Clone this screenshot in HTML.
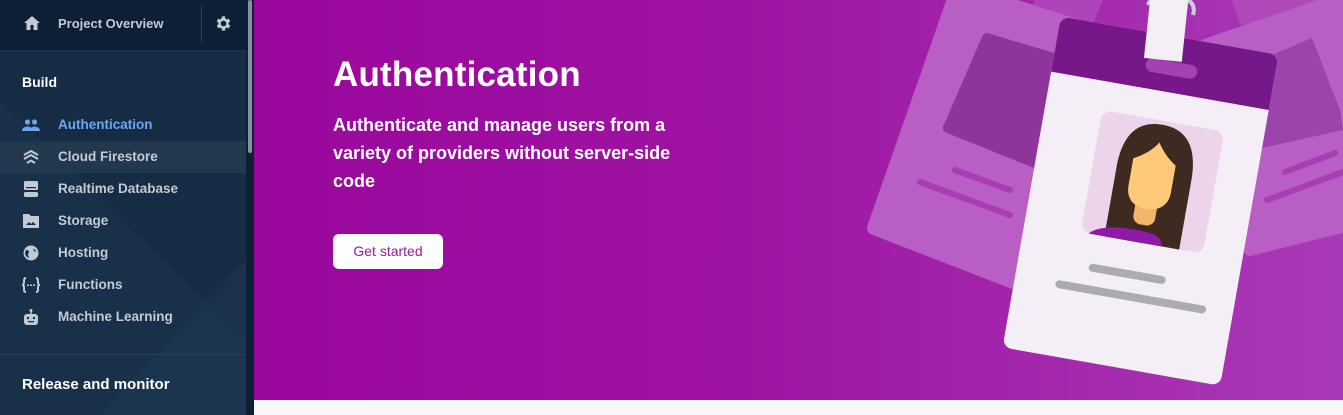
<!DOCTYPE html>
<html><head><style>
*{margin:0;padding:0;box-sizing:border-box}
body{width:1343px;height:415px;overflow:hidden;background:#f6f7f9;font-family:"Liberation Sans",sans-serif;position:relative}
#side{position:absolute;left:0;top:0;width:246px;height:415px;background:#162c45;overflow:hidden}
#top{position:absolute;left:0;top:0;width:246px;height:51px;background:#0d1f35;border-bottom:1px solid #24384f}
.it{position:absolute;left:0;width:246px;height:32px;color:#c3cad3;font-size:13.5px;font-weight:bold;line-height:32px;padding-left:58px}
.ic{position:absolute;left:22px;top:8px;width:18px;height:16px}
#sb{position:absolute;left:246px;top:0;width:8px;height:415px;background:#0e2035}
#thumb{position:absolute;left:248px;top:0;width:4px;height:153px;background:#8692a1;border-radius:2px}
#ban{position:absolute;left:254px;top:0;width:1089px;height:400px;background:linear-gradient(90deg,#9a079c 0%,#9e14a2 45%,#a93ab6 100%);overflow:hidden}
h1{position:absolute;left:79px;top:55px;color:#fff;font-size:35px;font-weight:bold;letter-spacing:0.2px}
.sub{position:absolute;left:79px;top:111px;color:#fff;font-size:18px;font-weight:bold;line-height:28px;width:372px}
.btn{position:absolute;left:79px;top:234px;width:110px;height:35px;background:#fff;border-radius:6px;color:#9a1a9e;font-size:14px;text-align:center;line-height:35px}
</style></head><body>
<div id="side">
<svg width="246" height="415" style="position:absolute;left:0;top:0"><polygon points="0,100 246,340 246,415 0,415" fill="#1a3350" opacity="0.5"/><polygon points="246,260 100,415 246,415" fill="#1e3856" opacity="0.5"/></svg>
<div id="top">
<svg style="position:absolute;left:23px;top:15px" width="18" height="16" viewBox="0 0 18 16"><path d="M9 1L1 8h2.5v7h4v-5h3v5h4V8H17z" fill="#c3cad3"/></svg>
<div style="position:absolute;left:58px;top:16px;color:#c3cad3;font-size:13px;font-weight:bold">Project Overview</div>
<div style="position:absolute;left:201px;top:6px;width:1px;height:36px;background:#2b3e55"></div>
<svg style="position:absolute;left:214px;top:14px" width="19" height="19" viewBox="0 0 24 24"><path fill="#c3cad3" d="M19.4 13a7.5 7.5 0 000-2l2.1-1.6-2-3.5-2.5 1a7 7 0 00-1.7-1L15 3h-4l-.4 2.9a7 7 0 00-1.7 1l-2.5-1-2 3.5L6.6 11a7.5 7.5 0 000 2l-2.1 1.6 2 3.5 2.5-1a7 7 0 001.7 1L11 21h4l.4-2.9a7 7 0 001.7-1l2.5 1 2-3.5zM13 15.5a3.5 3.5 0 110-7 3.5 3.5 0 010 7z" transform="translate(-1 0)"/></svg>
</div>
<div style="position:absolute;left:22px;top:74px;color:#fff;font-size:14px;font-weight:bold">Build</div>
<div class="it" style="top:109px;color:#6ea6ee"><svg class="ic" viewBox="0 0 18 16"><circle cx="5.5" cy="5" r="2.6" fill="#6ea6ee"/><circle cx="12.5" cy="5" r="2.6" fill="#6ea6ee"/><path d="M0 14c0-3 3-4.5 5.5-4.5S11 11 11 14zM8 14c0-2.5 2.5-4.5 4.5-4.5S18 11 18 14z" fill="#6ea6ee"/></svg>Authentication</div>
<div class="it" style="top:141px;background:#22384f"><svg class="ic" viewBox="0 0 18 16"><path d="M2 6l7-4 7 4M2 10l7-4 7 4M5 14l4-2.5 4 2.5" stroke="#c3cad3" stroke-width="2" fill="none"/></svg>Cloud Firestore</div>
<div class="it" style="top:173px"><svg class="ic" viewBox="0 0 18 16"><rect x="2" y="0" width="14" height="9" rx="1.5" fill="#c3cad3"/><rect x="2" y="11" width="14" height="5" rx="1.5" fill="#c3cad3"/><rect x="4" y="6" width="10" height="1.2" fill="#162c45"/></svg>Realtime Database</div>
<div class="it" style="top:205px"><svg class="ic" viewBox="0 0 18 16"><path d="M1 1h6l2 2h8v12H1z" fill="#c3cad3"/><path d="M4 12l3-3 2 2 2-2 3 3z" fill="#162c45"/></svg>Storage</div>
<div class="it" style="top:237px"><svg class="ic" viewBox="0 0 18 16"><circle cx="9" cy="8" r="7.5" fill="#c3cad3"/><path d="M4 5c2 0 3 1 3 2s-1 1-1 3l1 3c-2-.5-4-3-4-5zM11 3c1 1 0 2 1 3s2 0 3 1" fill="#162c45"/></svg>Hosting</div>
<div class="it" style="top:269px"><svg class="ic" viewBox="0 0 18 16"><path d="M4 1C2 1 2 3 2 5s-1 3-1 3 1 0 1 3 0 4 2 4M14 1c2 0 2 2 2 4s1 3 1 3-1 0-1 3 0 4-2 4" stroke="#c3cad3" stroke-width="2" fill="none"/><rect x="5" y="7.5" width="2" height="1.5" fill="#c3cad3"/><rect x="8" y="7.5" width="2" height="1.5" fill="#c3cad3"/><rect x="11" y="7.5" width="2" height="1.5" fill="#c3cad3"/></svg>Functions</div>
<div class="it" style="top:301px"><svg class="ic" viewBox="0 0 18 16"><circle cx="9" cy="1.5" r="1.5" fill="#c3cad3"/><rect x="8.3" y="2" width="1.4" height="3" fill="#c3cad3"/><rect x="2" y="5" width="14" height="11" rx="3" fill="#c3cad3"/><circle cx="6" cy="9" r="1.2" fill="#162c45"/><circle cx="12" cy="9" r="1.2" fill="#162c45"/><rect x="6" y="12" width="6" height="1.3" fill="#162c45"/></svg>Machine Learning</div>
<div style="position:absolute;left:0;top:354px;width:246px;height:1px;background:#2b4058"></div>
<div style="position:absolute;left:22px;top:376px;color:#fff;font-size:15px;font-weight:bold">Release and monitor</div>
</div>
<div id="sb"></div><div id="thumb"></div>
<div id="ban">
<svg width="1089" height="400" style="position:absolute;left:0;top:0">
<g transform="translate(-254 0)">
<polygon points="1040,-20 1105,-5 1090,30 1030,15" fill="#b556c2" opacity="0.6"/>
<polygon points="1230,-5 1310,-25 1320,10 1240,25" fill="#b556c2" opacity="0.6"/>
<polygon points="958,-12 1150,50 1060,300 874,228" fill="#b85ec4" stroke="#b85ec4" stroke-width="14" stroke-linejoin="round"/>
<polygon points="987,38 1070,63 1040,165 948,128" fill="#8f349c" stroke="#8f349c" stroke-width="10" stroke-linejoin="round"/>
<line x1="955" y1="170" x2="1010" y2="190" stroke="#a73eb4" stroke-width="6" stroke-linecap="round"/>
<line x1="920" y1="182" x2="1010" y2="215" stroke="#a73eb4" stroke-width="6" stroke-linecap="round"/>
<polygon points="1205,45 1350,-5 1350,225 1250,250" fill="#b85ec4" stroke="#b85ec4" stroke-width="12" stroke-linejoin="round"/>
<polygon points="1218,78 1312,38 1340,110 1343,130 1262,148" fill="#9c44ab"/>
<line x1="1285" y1="172" x2="1335" y2="153" stroke="#a73eb4" stroke-width="6" stroke-linecap="round"/>
<line x1="1267" y1="200" x2="1343" y2="172" stroke="#a73eb4" stroke-width="6" stroke-linecap="round"/>
<path d="M1148 5 q5 -12 15 -8 M1188 0 q8 5 5 15" stroke="#c8d0d8" stroke-width="4" fill="none"/>
<g transform="rotate(10 1140 201)">
<rect x="1030" y="33" width="221" height="336" rx="9" fill="#f4eef6"/>
<path d="M1039 33h203a9 9 0 019 9v47h-221v-47a9 9 0 019-9z" fill="#761889"/>
<rect x="1122" y="58" width="52" height="14" rx="7" fill="#a53fb4"/>
<rect x="1087" y="118" width="124" height="124" rx="10" fill="#ecd4ea"/>
</g>
<rect x="1147" y="-3" width="38" height="63" fill="#f3eff5" transform="rotate(6 1166 30)"/>
<g transform="rotate(10 1140 201)">
<clipPath id="cp"><rect x="1087" y="118" width="124" height="124" rx="10"/></clipPath>
<g clip-path="url(#cp)">
<path d="M1111 250 v-78 c0-35 14-50 38-50 s38 15 38 50 v78z" fill="#3f2a22"/>
<path d="M1090 250 c5-15 25-20 50-20 s30 3 30 20z" fill="#8f1aa5"/>
<rect x="1136" y="192" width="22" height="32" rx="8" fill="#f2b76a"/>
<path d="M1126 160 c10-5 18-12 23-20 c5 8 12 15 20 20 v28 c0 12-9 20-22 20 s-21-8-21-20z" fill="#fec978"/>
</g>
<line x1="1105" y1="275" x2="1175" y2="275" stroke="#adabb0" stroke-width="8" stroke-linecap="round"/>
<line x1="1075" y1="297" x2="1220" y2="297" stroke="#adabb0" stroke-width="8" stroke-linecap="round"/>
</g>
</g>
</svg>
<h1>Authentication</h1>
<div class="sub">Authenticate and manage users from a variety of providers without server-side code</div>
<div class="btn">Get started</div>
</div>
</body></html>
